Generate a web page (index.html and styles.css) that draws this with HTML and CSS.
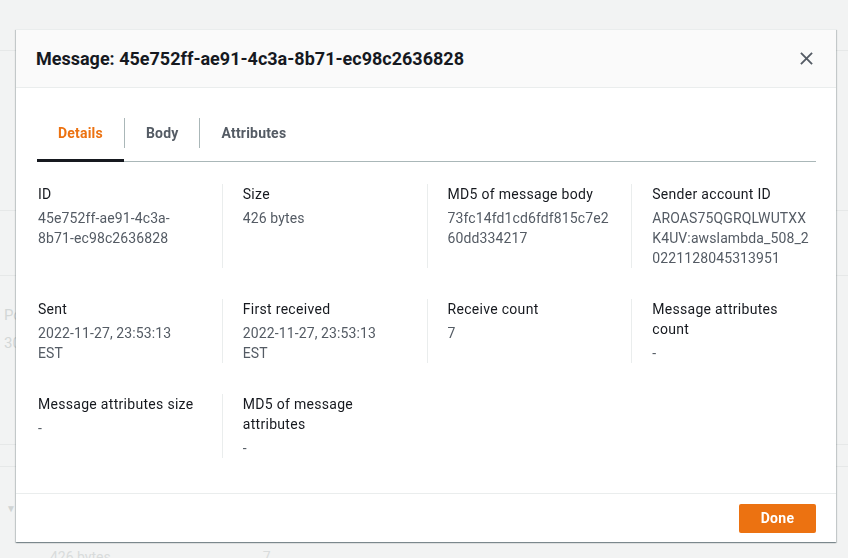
FILE: index.html
```html
<!DOCTYPE html>
<html lang="en">
<head>
<meta charset="utf-8">
<title>Message details</title>
<link rel="stylesheet" href="styles.css">
</head>
<body>
<div class="page">
  <div class="bg-row bg-top"></div>
  <div class="bg-row bg-a"></div>
  <div class="bg-row bg-b"></div>
  <div class="bg-row bg-c">
    <div class="bg-text">Po</div>
    <div class="bg-text bg-text2">30</div>
  </div>
  <div class="bg-row bg-d"></div>
  <div class="bg-row bg-e"><span class="bg-caret">&#9660;</span></div>
  <div class="bg-row bg-f"><span class="bg-size">426 bytes</span><span class="bg-count">7</span></div>
</div>

<div class="overlay">
  <div class="modal" role="dialog">
    <div class="modal-header">
      <h2 class="modal-title">Message: 45e752ff-ae91-4c3a-8b71-ec98c2636828</h2>
      <button class="close-btn" aria-label="Close">
        <svg width="14" height="14" viewBox="0 0 14 14"><path d="M1 1 L13 13 M13 1 L1 13" stroke="#545b64" stroke-width="2" fill="none"/></svg>
      </button>
    </div>
    <div class="modal-body">
      <div class="tabs">
        <div class="tab tab-active">Details</div>
        <div class="tab">Body</div>
        <div class="tab">Attributes</div>
      </div>
      <div class="details">
        <div class="kv"><div class="k">ID</div><div class="v">45e752ff-ae91-4c3a-<br>8b71-ec98c2636828</div></div>
        <div class="kv"><div class="k">Size</div><div class="v">426 bytes</div></div>
        <div class="kv"><div class="k">MD5 of message body</div><div class="v">73fc14fd1cd6fdf815c7e2<br>60dd334217</div></div>
        <div class="kv"><div class="k">Sender account ID</div><div class="v">AROAS75QGRQLWUTXX<br>K4UV:awslambda_508_2<br>0221128045313951</div></div>

        <div class="kv"><div class="k">Sent</div><div class="v">2022-11-27, 23:53:13<br>EST</div></div>
        <div class="kv"><div class="k">First received</div><div class="v">2022-11-27, 23:53:13<br>EST</div></div>
        <div class="kv"><div class="k">Receive count</div><div class="v">7</div></div>
        <div class="kv"><div class="k">Message attributes count</div><div class="v">-</div></div>

        <div class="kv"><div class="k">Message attributes size</div><div class="v">-</div></div>
        <div class="kv"><div class="k">MD5 of message attributes</div><div class="v">-</div></div>
      </div>
    </div>
    <div class="modal-footer">
      <button class="done-btn">Done</button>
    </div>
  </div>
</div>
</body>
</html>
```
FILE: styles.css
```css
html, body {
  margin: 0;
  padding: 0;
}
body {
  background: #f2f3f3;
  font-family: Roboto, "Liberation Sans", Arial, sans-serif;
  font-size: 14px;
  line-height: 20px;
  color: #16191f;
  width: 848px;
  height: 558px;
  overflow: hidden;
}

/* background page (seen through the overlay) */
.page {
  display: flex;
  flex-direction: column;
}
.bg-row {
  border-bottom: 1px solid #e6e8e8;
  position: relative;
}
.bg-top { height: 50px; }
.bg-a { height: 159px; }
.bg-b { height: 64px; }
.bg-c {
  height: 169px;
  padding-top: 29px;
  box-sizing: border-box;
}
.bg-text {
  color: #d3d7d7;
  font-size: 15px;
  padding-left: 4px;
  line-height: 20px;
}
.bg-text2 { margin-top: 8px; }
.bg-d { height: 21px; }
.bg-e {
  height: 82px;
  padding-top: 30px;
  box-sizing: border-box;
  border-bottom: none;
}
.bg-caret {
  color: #d0d4d4;
  font-size: 10px;
  padding-left: 6px;
}
.bg-f {
  border-bottom: none;
  color: #d9dcdc;
  display: flex;
  font-size: 14px;
  line-height: 16px;
}
.bg-size { margin-left: 50px; }
.bg-count { margin-left: 152px; }

/* overlay & modal */
.overlay {
  position: fixed;
  inset: 0;
  padding: 29px 0 0 16px;
}
.modal {
  width: 820px;
  background: #fff;
  box-shadow: 0 1px 1px 0 rgba(0, 28, 36, 0.3), 1px 1px 1px 0 rgba(0, 28, 36, 0.15), -1px 1px 1px 0 rgba(0, 28, 36, 0.15);
  border-top: 1px solid #eaeded;
}
.modal-header {
  height: 57px;
  background: #fafafa;
  border-bottom: 1px solid #eaeded;
  display: flex;
  align-items: center;
  justify-content: space-between;
  padding: 0 20px;
}
.modal-title {
  margin: 0;
  font-size: 18px;
  font-weight: 700;
  line-height: 22px;
  color: #16191f;
}
.close-btn {
  border: none;
  background: none;
  padding: 0;
  width: 20px;
  height: 20px;
  display: flex;
  align-items: center;
  justify-content: center;
}
.close-btn svg { width: 13px; height: 13px; }

.modal-body {
  padding: 16px 20px 35px 21px;
}
.tabs {
  display: flex;
  border-bottom: 1px solid #aab7b8;
}
.tab {
  position: relative;
  padding: 19px 21px 18px;
  font-weight: 700;
  color: #545b64;
  line-height: 20px;
  letter-spacing: 0.2px;
}
.tab + .tab::before {
  content: "";
  position: absolute;
  left: -1px;
  top: 14px;
  bottom: 13px;
  border-left: 1px solid #aab7b8;
}
.tab + .tab { margin-left: 1px; }
.tab-active {
  color: #ec7211;
}
.tab-active::after {
  content: "";
  position: absolute;
  left: 0;
  right: 0;
  bottom: -1px;
  height: 3px;
  background: #16191f;
}

.details {
  display: grid;
  grid-template-columns: repeat(4, 1fr);
  row-gap: 31px;
  margin: 22px -20px 0 -20px;
}
.kv {
  padding: 0 20px;
  border-left: 1px solid #eaeded;
}
.kv:nth-child(4n+1) {
  border-left-color: transparent;
}
.k {
  color: #16191f;
  margin-bottom: 4px;
  letter-spacing: 0.3px;
}
.v {
  color: #545b64;
  letter-spacing: 0.12px;
}

.modal-footer {
  border-top: 1px solid #eaeded;
  height: 48px;
  display: flex;
  align-items: center;
  justify-content: flex-end;
  padding: 0 20px;
}
.done-btn {
  background: #ec7211;
  color: #fff;
  border: none;
  border-radius: 2px;
  font-family: inherit;
  font-size: 14px;
  font-weight: 700;
  letter-spacing: 0.3px;
  width: 77px;
  height: 29px;
  padding: 0;
}
```
